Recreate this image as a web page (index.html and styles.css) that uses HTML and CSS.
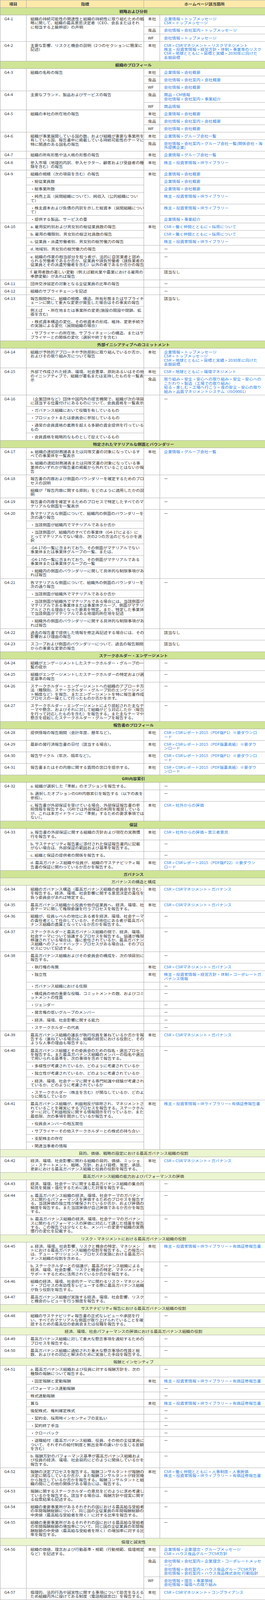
FILE: index.html
```html
<!DOCTYPE html>
<html lang="ja">
<head>
<meta charset="utf-8">
<title>GRIガイドライン対照表</title>
<link rel="stylesheet" href="styles.css">
</head>
<body>
<div class="frame">
<table class="gri">
<colgroup><col class="c-id"><col class="c-ind"><col class="c-co"><col class="c-link"></colgroup>
<thead>
<tr class="head"><th>項目</th><th>指標</th><th colspan="2">ホームページ該当箇所</th></tr>
</thead>
<tbody>
<tr class="sec"><td colspan="4">戦略および分析</td></tr>
<tr><td rowspan="3">G4-1</td><td rowspan="3">組織の持続可能性の関連性と組織の持続性に取り組むための戦<br>略に関して、組織の最高意思決定者（CEO、会長またはそれ<br>に相当する上級幹部）の声明</td><td>本社</td><td><a href="#">企業情報 &gt; トップメッセージ</a><br><a href="#">CSR &gt; トップメッセージ</a></td></tr>
<tr><td>食品</td><td><a href="#">会社情報 &gt; 会社案内 &gt; トップメッセージ</a></td></tr>
<tr><td>WF</td><td><a href="#">会社情報 &gt; トップメッセージ</a></td></tr>
<tr><td>G4-2</td><td>主要な影響、リスクと機会の説明（2つのセクションに簡潔に<br>記述）</td><td>本社</td><td><a href="#">CSR &gt; CSRマネジメント &gt; リスクマネジメント</a><br><a href="#">株主・投資家情報 &gt; 経営方針・体制 &gt; 事業等のリスク</a><br><a href="#">CSR &gt; 地球とともに &gt; 目標と実績 &gt; 2030年に向けた<br>長期目標</a></td></tr>

<tr class="sec"><td colspan="4">組織のプロフィール</td></tr>
<tr><td rowspan="3">G4-3</td><td rowspan="3">組織の名称の報告</td><td>本社</td><td><a href="#">企業情報 &gt; 会社概要</a></td></tr>
<tr><td>食品</td><td><a href="#">会社情報 &gt; 会社案内 &gt; 会社概要</a></td></tr>
<tr><td>WF</td><td><a href="#">会社情報 &gt; 会社概要</a></td></tr>
<tr><td rowspan="2">G4-4</td><td rowspan="2">主要なブランド、製品およびサービスの報告</td><td>食品</td><td><a href="#">商品・CM情報</a><br><a href="#">会社情報 &gt; 会社案内 &gt; 事業紹介</a></td></tr>
<tr><td>WF</td><td><a href="#">商品情報</a></td></tr>
<tr><td rowspan="3">G4-5</td><td rowspan="3">組織の本社の所在地の報告</td><td>本社</td><td><a href="#">企業情報 &gt; 会社概要</a></td></tr>
<tr><td>食品</td><td><a href="#">会社情報 &gt; 会社案内 &gt; 会社概要</a></td></tr>
<tr><td>WF</td><td><a href="#">会社情報 &gt; 会社概要</a></td></tr>
<tr><td rowspan="2">G4-6</td><td rowspan="2">組織が事業展開している国の数、および組織が重要な事業所を<br>有している国、報告書中に掲載している持続可能性のテーマに<br>特に関連のある国名の報告</td><td>本社</td><td><a href="#">企業情報 &gt; グループ会社一覧</a></td></tr>
<tr><td>食品</td><td><a href="#">会社情報 &gt; 会社案内 &gt; グループ会社一覧(関係会社・海<br>外提携企業)</a></td></tr>
<tr><td>G4-7</td><td>組織の所有形態や法人格の形態の報告</td><td>本社</td><td><a href="#">企業情報 &gt; グループ会社一覧</a></td></tr>
<tr><td>G4-8</td><td>参入市場（地理的内訳、参入セクター、顧客および受益者の種<br>類を含む）の報告</td><td>本社</td><td><a href="#">株主・投資家情報 &gt; IRライブラリー</a></td></tr>
<tr><td rowspan="6">G4-9</td><td>組織の規模（次の項目を含む）の報告</td><td rowspan="6">本社</td><td><a href="#">企業情報 &gt; 会社概要</a></td></tr>
<tr><td>・総従業員数</td><td><a href="#">企業情報 &gt; 会社概要</a></td></tr>
<tr><td>・総事業所数</td><td><a href="#">企業情報 &gt; 会社概要</a></td></tr>
<tr><td>・純売上高（民間組織について）、純収入（公的組織につい<br>て）</td><td><a href="#">株主・投資家情報 &gt; IRライブラリー</a></td></tr>
<tr><td>・株主資本および負債の内訳を示した総資本（民間組織につい<br>て）</td><td><a href="#">株主・投資家情報 &gt; IRライブラリー</a></td></tr>
<tr><td>・提供する製品、サービスの量</td><td><a href="#">企業情報 &gt; 事業紹介</a></td></tr>
<tr><td rowspan="6">G4-10</td><td>a. 雇用契約別および男女別の総従業員数の報告</td><td rowspan="3">本社</td><td><a href="#">CSR &gt; 働く仲間とともに &gt; 採用について</a></td></tr>
<tr><td>b. 雇用の種類別、男女別の総正社員数の報告</td><td><a href="#">CSR &gt; 働く仲間とともに &gt; 採用について</a></td></tr>
<tr><td>c. 従業員・派遣労働者別、男女別の総労働力の報告</td><td><a href="#">株主・投資家情報 &gt; IRライブラリー</a></td></tr>
<tr><td>d. 地域別、男女別の総労働力の報告</td><td></td><td>ー</td></tr>
<tr><td>e. 組織の作業の相当部分を担う者が、法的に自営業者と認め<br>られる労働者であるか否か、従業員や請負労働者（請負業者の<br>従業員とその派遣労働者を含む）以外の者であるか否かの報告</td><td></td><td>ー</td></tr>
<tr><td>f. 雇用者数の著しい変動（例えば観光業や農業における雇用の<br>季節変動）があれば報告</td><td></td><td>該当なし</td></tr>
<tr><td>G4-11</td><td>団体交渉協定の対象となる全従業員の比率の報告</td><td></td><td>ー</td></tr>
<tr><td>G4-12</td><td>組織のサプライチェーンを記述</td><td></td><td>ー</td></tr>
<tr><td rowspan="4">G4-13</td><td>報告期間中に、組織の規模、構造、所有形態またはサプライチ<br>ェーンに関して重大な変更が発生した場合はその事実の報告</td><td rowspan="4"></td><td rowspan="4">該当なし</td></tr>
<tr><td>例えば　・所在地または事業所の変更(施設の開設や閉鎖、拡<br>張を含む)</td></tr>
<tr><td>・株式資本構造の変化、その他資本の形成、維持、変更手続き<br>の実施による変化（民間組織の場合）</td></tr>
<tr><td>・サプライヤーの所在地、サプライチェーンの構造、またはサ<br>プライヤーとの関係の変化（選択や終了を含む）</td></tr>

<tr class="sec"><td colspan="4">外部イニシアティブへのコミットメント</td></tr>
<tr><td>G4-14</td><td>組織が予防的アプローチや予防原則に取り組んでいるか否か、<br>およびその取り組み方について報告</td><td>本社</td><td><a href="#">企業情報 &gt; トップメッセージ</a><br><a href="#">CSR &gt; トップメッセージ</a><br><a href="#">CSR &gt; 地球とともに &gt; 目標と実績 &gt; 2030年に向けた<br>長期目標</a></td></tr>
<tr><td rowspan="2">G4-15</td><td rowspan="2">外部で作成された経済、環境、社会憲章、原則あるいはその他<br>のイニシアティブで、組織が署名または支持したものを一覧表<br>示</td><td>本社</td><td><a href="#">CSR &gt; 地球とともに &gt; 環境マネジメント</a></td></tr>
<tr><td>食品</td><td><a href="#">取り組み &gt; 安全・安心への取り組み &gt; 安全・安心への<br>こだわり &gt; 製造（工場での取り組み）</a><br><a href="#">知る・楽しむ &gt; 工場へ行こう &gt; 食の安全・安心の取り<br>組み &gt; 品質マネジメントシステム（ISO9001）</a></td></tr>
<tr><td rowspan="5">G4-16</td><td>（企業団体など）団体や国内外の提言機関で、組織が次の項目<br>に該当する位置付けにあるものについて、会員資格を一覧表示</td><td rowspan="5"></td><td rowspan="5">ー</td></tr>
<tr><td>・ガバナンス組織において役職を有しているもの</td></tr>
<tr><td>・プロジェクトまたは委員会に参加しているもの</td></tr>
<tr><td>・通常の会員資格の義務を超える多額の資金提供を行っている<br>もの</td></tr>
<tr><td>・会員資格を戦略的なものとして捉えているもの</td></tr>

<tr class="sec"><td colspan="4">特定されたマテリアルな側面とバウンダリー</td></tr>
<tr><td rowspan="2">G4-17</td><td>a. 組織の連結財務諸表または同等文書の対象になっているす<br>べての事業体を一覧表示</td><td rowspan="2">本社</td><td rowspan="2"><a href="#">企業情報 &gt; グループ会社一覧</a></td></tr>
<tr><td>b. 組織の連結財務諸表または同等文書の対象になっている事<br>業体のいずれかが報告書の掲載から外れていることはないか報<br>告</td></tr>
<tr><td rowspan="2">G4-18</td><td>報告書の内容および側面のバウンダリーを確定するためのプロ<br>セスの説明</td><td rowspan="2"></td><td rowspan="2">ー</td></tr>
<tr><td>組織が「報告内容に関する原則」をどのように適用したかの説<br>明</td></tr>
<tr><td>G4-19</td><td>報告書の内容を確定するためのプロセスで特定したすべてのマ<br>テリアルな側面を一覧表示</td><td></td><td>ー</td></tr>
<tr><td rowspan="6">G4-20</td><td>各マテリアルな側面について、組織内の側面のバウンダリーを<br>次の通り報告</td><td rowspan="6"></td><td rowspan="6">ー</td></tr>
<tr><td>・当該側面が組織内でマテリアルであるか否か</td></tr>
<tr><td>・当該側面が、組織内のすべての事業体（G4-17による）に<br>とってマテリアルでない場合、次の2つの方法のどちらかを選<br>択</td></tr>
<tr><td>-G4-17の一覧に含まれており、その側面がマテリアルでない<br>事業体または事業体グループの一覧、または、</td></tr>
<tr><td>-G4-17の一覧に含まれており、その側面がマテリアルである<br>事業体または事業体グループの一覧</td></tr>
<tr><td>・組織内の側面のバウンダリーに関して具体的な制限事項があ<br>れば報告</td></tr>
<tr><td rowspan="4">G4-21</td><td>各マテリアルな側面について、組織外の側面のバウンダリーを<br>次の通り報告</td><td rowspan="4"></td><td rowspan="4">ー</td></tr>
<tr><td>・当該側面が組織外でマテリアルであるか否か</td></tr>
<tr><td>・当該側面が組織外でマテリアルである場合には、当該側面が<br>マテリアルである事業体または事業体グループ、側面がマテリ<br>アルとされる理由となった要素を特定。また、特定した事業体<br>で当該側面がマテリアルである地理的所在地を記述</td></tr>
<tr><td>・組織外の側面のバウンダリーに関する具体的な制限事項があ<br>れば報告</td></tr>
<tr><td>G4-22</td><td>過去の報告書で提供した情報を修正再記述する場合には、その<br>影響および理由の報告</td><td></td><td>該当なし</td></tr>
<tr><td>G4-23</td><td>スコープおよび側面のバウンダリーについて、過去の報告期間<br>からの重要な変更の報告</td><td></td><td>該当なし</td></tr>

<tr class="sec"><td colspan="4">ステークホルダー・エンゲージメント</td></tr>
<tr><td>G4-24</td><td>組織がエンゲージメントしたステークホルダー・グループの一<br>覧の提示</td><td></td><td>ー</td></tr>
<tr><td>G4-25</td><td>組織がエンゲージメントしたステークホルダーの特定および選<br>定基準の報告</td><td></td><td>ー</td></tr>
<tr><td>G4-26</td><td>ステークホルダー・エンゲージメントへの組織のアプローチ方<br>法（種類別、ステークホルダー・グループ別のエンゲージメン<br>ト頻度など）を報告、またエンゲージメントを特に報告書作成<br>プロセスの一環として行ったものか否かを示す。</td><td></td><td>ー</td></tr>
<tr><td>G4-27</td><td>ステークホルダー・エンゲージメントにより提起された主なテ<br>ーマや懸念、およびそれに対して組織がどう対応したか（報告<br>を行って対応したものを含む）を報告する。また主なテーマや<br>懸念を提起したステークホルダー・グループを報告する。</td><td></td><td>ー</td></tr>

<tr class="sec"><td colspan="4">報告書のプロフィール</td></tr>
<tr><td>G4-28</td><td>提供情報の報告期間（会計年度、暦年など）。</td><td>本社</td><td><a href="#">CSR &gt; CSRレポート2015（PDF版P1）※要ダウンロ<br>ード</a></td></tr>
<tr><td>G4-29</td><td>最新の発行済報告書の日付（該当する場合）。</td><td>本社</td><td><a href="#">CSR &gt; CSRレポート2015（PDF版裏表紙）※要ダウ<br>ンロード</a></td></tr>
<tr><td>G4-30</td><td>報告サイクル（年次、隔年など）。</td><td>本社</td><td><a href="#">CSR &gt; CSRレポート2015（PDF版P1）※要ダウンロ<br>ード</a></td></tr>
<tr><td>G4-31</td><td>報告書またはその内容に関する質問の窓口を提示する。</td><td>本社</td><td><a href="#">CSR &gt; CSRレポート2015（PDF版裏表紙）※要ダウ<br>ンロード</a></td></tr>

<tr class="sec"><td colspan="4">GRI内容索引</td></tr>
<tr><td rowspan="3">G4-32</td><td>a. 組織が選択した「準拠」のオプションを報告する。</td><td></td><td>ー</td></tr>
<tr><td>b. 選択したオプションのGRI内容索引を報告する（以下の表を<br>参照）。</td><td></td><td>ー</td></tr>
<tr><td>c. 報告書が外部保証を受けている場合、外部保証報告書の参<br>照情報を報告する。（GRIでは外部保証の利用を推奨している<br>が、これは本ガイドラインに「準拠」するための要求事項では<br>ない）。</td><td>本社</td><td><a href="#">CSR &gt; 社外からの評価</a></td></tr>

<tr class="sec"><td colspan="4">保証</td></tr>
<tr><td rowspan="4">G4-33</td><td>a. 報告書の外部保証に関する組織の方針および現在の実務慣<br>行を報告する。</td><td>本社</td><td><a href="#">CSR &gt; 社外からの評価 &gt; 第三者意見</a></td></tr>
<tr><td>b. サステナビリティ報告書に添付された保証報告書内に記載<br>がない場合は、外部保証の範囲および基準を報告する。</td><td></td><td>ー</td></tr>
<tr><td>c. 組織と保証の提供者の関係を報告する。</td><td></td><td>ー</td></tr>
<tr><td>d. 最高ガバナンス組織や役員が、組織のサステナビリティ報<br>告書の保証に関わっているか否かを報告する。</td><td>本社</td><td><a href="#">CSR &gt; CSRレポート2015（PDF版P22）※要ダウン<br>ロード</a></td></tr>

<tr class="sec"><td colspan="4">ガバナンス</td></tr>
<tr class="sub"><td colspan="4">ガバナンスの構造と構成</td></tr>
<tr><td>G4-34</td><td>組織のガバナンス構造（最高ガバナンス組織の委員会を含む）<br>を報告する。経済、環境、社会影響に関する意思決定の責任を<br>負う委員会があれば特定する。</td><td>本社</td><td><a href="#">CSR &gt; CSRマネジメント &gt; ガバナンス</a></td></tr>
<tr><td>G4-35</td><td>最高ガバナンス組織から役員や他の従業員へ、経済、環境、社<br>会テーマに関して権限委譲を行うプロセスを報告する。</td><td>本社</td><td><a href="#">CSR &gt; CSRマネジメント &gt; ガバナンス</a></td></tr>
<tr><td>G4-36</td><td>組織が、役員レベルの地位にある者を経済、環境、社会テーマ<br>の責任者として任命しているか、その地位にある者が最高ガバ<br>ナンス組織の直属となっているか否かを報告する。</td><td></td><td>ー</td></tr>
<tr><td>G4-37</td><td>ステークホルダーと最高ガバナンス組織の間で、経済、環境、<br>社会テーマについて協議するプロセスを報告する。協議が権限<br>移譲されている場合は、誰に委任されているか、最高ガバナン<br>ス組織へのフィードバック・プロセスがある場合は、そのプロ<br>セスについて記述する。</td><td></td><td>ー</td></tr>
<tr><td rowspan="9">G4-38</td><td>最高ガバナンス組織およびその委員会の構成を、次の項目別に<br>報告する。</td><td></td><td>ー</td></tr>
<tr><td>・執行権の有無</td><td>本社</td><td><a href="#">CSR &gt; CSRマネジメント &gt; ガバナンス</a></td></tr>
<tr><td>・独立性</td><td>本社</td><td><a href="#">株主・投資家情報 &gt; 経営方針・体制 &gt; コーポレートガ<br>バナンス情報</a></td></tr>
<tr><td>・ガバナンス組織における任期</td><td></td><td>ー</td></tr>
<tr><td>・構成員の他の重要な役職、コミットメントの数、およびコミ<br>ットメントの性質</td><td></td><td>ー</td></tr>
<tr><td>・ジェンダー</td><td></td><td>ー</td></tr>
<tr><td>・発言権の低いグループのメンバー</td><td></td><td>ー</td></tr>
<tr><td>・経済、環境、社会影響に関する能力</td><td></td><td>ー</td></tr>
<tr><td>・ステークホルダーの代表</td><td></td><td>ー</td></tr>
<tr><td>G4-39</td><td>最高ガバナンス組織の議長が執行役員を兼ねているか否かを報<br>告する（兼ねている場合は、組織の経営における役割と、その<br>ような人事の理由も報告する）。</td><td>本社</td><td><a href="#">CSR &gt; CSRマネジメント &gt; ガバナンス</a></td></tr>
<tr><td rowspan="5">G4-40</td><td>最高ガバナンス組織とその委員会のための指名・選出プロセス<br>を報告する。また最高ガバナンス組織のメンバーの指名や選出<br>で用いられる基準を、次の事項を含めて報告する。</td><td rowspan="5"></td><td rowspan="5">ー</td></tr>
<tr><td>・多様性が考慮されているか、どのように考慮されているか</td></tr>
<tr><td>・独立性が考慮されているか、どのように考慮されているか</td></tr>
<tr><td>・経済、環境、社会テーマに関する専門知識や経験が考慮され<br>ているか、どのように考慮されているか</td></tr>
<tr><td>・ステークホルダー（株主を含む）が関与しているか、どのよ<br>うに関与しているか</td></tr>
<tr><td rowspan="5">G4-41</td><td>最高ガバナンス組織が、利益相反が排除され、マネジメントさ<br>れていることを確実にするプロセスを報告する。ステークホル<br>ダーに対して利益相反に関する情報開示を行っているか、また<br>最低限、次の事項を開示しているか報告する。</td><td rowspan="5">本社</td><td rowspan="5"><a href="#">株主・投資家情報 &gt; IRライブラリー&gt; 有価証券報告書</a></td></tr>
<tr><td>・役員会メンバーの相互就任</td></tr>
<tr><td>・サプライヤーその他ステークホルダーとの株式の持ち合い</td></tr>
<tr><td>・支配株主の存在</td></tr>
<tr><td>・関連当事者の情報</td></tr>

<tr class="sub"><td colspan="4">目的、価値、戦略の設定における最高ガバナンス組織の役割</td></tr>
<tr><td>G4-42</td><td>経済、環境、社会影響に関わる組織の目的、価値、ミッショ<br>ン・ステートメント、戦略、方針、および目標、策定、承認、<br>更新における最高ガバナンス組織と役員の役割を報告する。</td><td>本社</td><td><a href="#">CSR &gt; CSRマネジメント &gt; ガバナンス</a></td></tr>

<tr class="sub"><td colspan="4">最高ガバナンス組織の能力およびパフォーマンスの評価</td></tr>
<tr><td>G4-43</td><td>経済、環境、社会テーマに関する最高ガバナンス組織の集合的<br>知見を発展・強化するために講じた対策を報告する。</td><td></td><td>ー</td></tr>
<tr><td rowspan="2">G4-44</td><td>a. 最高ガバナンス組織の経済、環境、社会テーマのガバナン<br>スに関わるパフォーマンスを評価するためのプロセスを報告す<br>る。当該評価の独立性が確保されているか否か、および評価の<br>頻度を報告する。また当該評価が自己評価であるか否かを報告<br>する。</td><td></td><td>ー</td></tr>
<tr><td>b. 最高ガバナンス組織の経済、環境、社会テーマのガバナン<br>スに関わるパフォーマンスの評価に対応して講じた措置を報告<br>する。この報告では少なくとも、メンバーの変更や組織の実務<br>慣行の変化を記載する。</td><td></td><td>ー</td></tr>

<tr class="sub"><td colspan="4">リスク・マネジメントにおける最高ガバナンス組織の役割</td></tr>
<tr><td rowspan="2">G4-45</td><td>a. 経済、環境、社会影響、リスクと機会の特定、マネジメン<br>トにおける最高ガバナンス組織の役割を報告する。この報告に<br>は、デュー・デリジェンス・プロセスの実施における最高ガバ<br>ナンス組織の役割を含める。</td><td>本社</td><td><a href="#">株主・投資家情報 &gt; IRライブラリー &gt; 有価証券報告書</a></td></tr>
<tr><td>b. ステークホルダーとの協議が、最高ガバナンス組織による<br>経済、環境、社会影響、リスクと機会の特定、マネジメントを<br>サポートするために活用されているか否かを報告する。</td><td></td><td>ー</td></tr>
<tr><td>G4-46</td><td>組織の経済、環境、社会的テーマに関わるリスク・マネジメン<br>ト・プロセスの有効性をレビューする際に最高ガバナンス組織<br>が負う役割を報告する。</td><td></td><td>ー</td></tr>
<tr><td>G4-47</td><td>最高ガバナンス組織が実施する経済、環境、社会影響、リスク<br>と機会のレビューを行う頻度を報告する。</td><td></td><td>ー</td></tr>

<tr class="sub"><td colspan="4">サステナビリティ報告における最高ガバナンス組織の役割</td></tr>
<tr><td>G4-48</td><td>組織のサステナビリティ報告書の正式なレビューや承認を行<br>い、すべてのマテリアルな側面が取り上げられていることを確<br>認するための最高位の委員会または役職を報告する。</td><td></td><td>ー</td></tr>

<tr class="sub"><td colspan="4">経済、環境、社会パフォーマンスの評価における最高ガバナンス組織の役割</td></tr>
<tr><td>G4-49</td><td>最高ガバナンス組織に対して重大な懸念事項を通知するための<br>プロセスを報告する。</td><td></td><td>ー</td></tr>
<tr><td>G4-50</td><td>最高ガバナンス組織に通知された重大な懸念事項の性質と総<br>数、およびその対応と解決のために実施した手段を報告する。</td><td></td><td>ー</td></tr>

<tr class="sub"><td colspan="4">報酬とインセンティブ</td></tr>
<tr><td rowspan="11">G4-51</td><td>a. 最高ガバナンス組織および役員に対する報酬方針を、次の<br>種類の報酬について報告する。</td><td></td><td>ー</td></tr>
<tr><td>・固定報酬と変動報酬</td><td>本社</td><td><a href="#">株主・投資家情報 &gt; IRライブラリー &gt; 有価証券報告書</a></td></tr>
<tr><td>パフォーマンス連動報酬</td><td></td><td>ー</td></tr>
<tr><td>株式連動報酬</td><td></td><td>ー</td></tr>
<tr><td>賞与</td><td>本社</td><td><a href="#">株主・投資家情報 &gt; IRライブラリー &gt; 有価証券報告書</a></td></tr>
<tr><td>後配株式、権利確定株式</td><td></td><td>ー</td></tr>
<tr><td>・契約金、採用時インセンティブの支払い</td><td></td><td>ー</td></tr>
<tr><td>・契約終了手当</td><td></td><td>ー</td></tr>
<tr><td>・クローバック</td><td></td><td>ー</td></tr>
<tr><td>・退職給付（最高ガバナンス組織、役員、その他の全従業員に<br>ついて、それぞれの給付制度と拠出金率の違いから生じる差額<br>を含む）</td><td></td><td>ー</td></tr>
<tr><td>b. 報酬方針のパフォーマンス基準が最高ガバナンス組織およ<br>び役員の経済、環境、社会目的にどのように関係しているかを<br>報告する。</td><td></td><td>ー</td></tr>
<tr><td>G4-52</td><td>報酬の決定プロセスを報告する。報酬コンサルタントが報酬の<br>決定に関与しているか否か、また報酬コンサルタントが経営陣<br>から独立しているか否かを報告する。報酬コンサルタントと組<br>織の間にこの他の関係がある場合には、報告する。</td><td>本社</td><td><a href="#">CSR &gt; 働く仲間とともに &gt; 人事制度・人事評価</a><br><a href="#">株主・投資家情報 &gt; IRライブラリー &gt; 有価証券報告書</a></td></tr>
<tr><td>G4-53</td><td>報酬に関するステークホルダーの意見をどのように求め考慮し<br>ているかを報告する。該当する場合は、報酬方針や提案に関す<br>る投票結果も記述する。</td><td></td><td>ー</td></tr>
<tr><td>G4-54</td><td>組織の重要事業所があるそれぞれの国における最高給与受給者<br>の年間報酬総額について、同じ国の全従業員の年間報酬総額の<br>中央値（最高給与受給者を除く）に対する比率を報告する。</td><td></td><td>ー</td></tr>
<tr><td>G4-55</td><td>組織の重要事業所があるそれぞれの国における最高給与受給者<br>の年間報酬総額の増加率について、同じ国の全従業員の年間報<br>酬総額の中央値（最高給与受給者を除く）の増加率に対する比<br>率を報告する。</td><td></td><td>ー</td></tr>

<tr class="sub"><td colspan="4">倫理と誠実性</td></tr>
<tr><td rowspan="3">G4-56</td><td rowspan="3">組織の価値、理念および行動基準・規範（行動規範、倫理規定<br>など）を記述する。</td><td>本社</td><td><a href="#">企業情報 &gt; 企業理念・グループメッセージ</a><br><a href="#">CSR &gt; ハウス食品グループCSR方針</a></td></tr>
<tr><td>食品</td><td><a href="#">会社情報 &gt; 会社案内 &gt; 企業理念・コーポレートメッセ<br>ージ</a><br><a href="#">会社情報 &gt; 会社案内 &gt; ハウス食品グループCSR方針</a><br><a href="#">会社情報 &gt; 会社案内 &gt; ハウス食品株式会社 行動指針</a></td></tr>
<tr><td>WF</td><td><a href="#">会社情報 &gt; 理念・事業領域</a><br><a href="#">会社情報 &gt; 環境への取り組み</a></td></tr>
<tr><td>G4-57</td><td>倫理的、法的行為や誠実性に関する事項について助言を与える<br>ため組織内外に設けてある制度（電話相談窓口）を報告する。</td><td>本社</td><td><a href="#">CSR &gt; CSRマネジメント &gt; コンプライアンス</a></td></tr>
</tbody>
</table>
</div>
</body>
</html>
```

FILE: styles.css
```css
html, body {
  margin: 0;
  padding: 0;
  background: #ffffff;
}

body {
  font-family: "Noto Sans CJK JP", "Noto Sans", sans-serif;
  font-size: 10.4px;
  line-height: 12px;
  color: #333333;
}

/* the photographed frame is 4096px tall; the table is drawn to the
   4725px design and scaled vertically so it fits that frame */
.frame {
  height: 4096px;
  overflow: hidden;
}

.gri {
  width: 679px;
  border-collapse: collapse;
  table-layout: fixed;
  transform: scaleY(0.86688);
  transform-origin: 0 0;
}

.c-id { width: 67px; }
.c-ind { width: 301px; }
.c-co { width: 41px; }
.c-link { width: 270px; }

.gri th,
.gri td {
  border: 1px solid #a7a7a7;
  padding: 5px 6px 4px 10px;
  vertical-align: top;
  text-align: left;
  font-weight: normal;
  white-space: nowrap;
}

.gri th {
  background: #fde9a9;
  text-align: center;
  vertical-align: middle;
  padding-left: 4px;
  padding-right: 4px;
  font-weight: bold;
}

.sec td {
  background: #cfe495;
  text-align: center;
  font-weight: bold;
}

.sub td {
  background: #ebf5cf;
  text-align: center;
}

.gri a {
  color: #2a82e4;
  text-decoration: none;
}
```
